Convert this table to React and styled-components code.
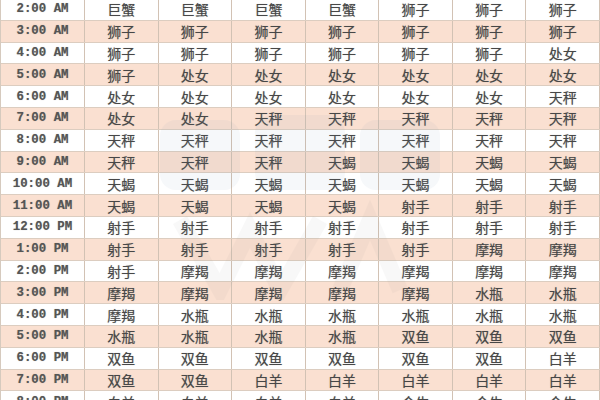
import React from "react";
import styled, { createGlobalStyle } from "styled-components";

const GlobalStyle = createGlobalStyle`
  html, body {
    margin: 0;
    padding: 0;
    background: #ffffff;
    overflow: hidden;
  }
`;

const rows = [
  ["2:00 AM", "巨蟹 巨蟹 巨蟹 巨蟹 狮子 狮子 狮子"],
  ["3:00 AM", "狮子 狮子 狮子 狮子 狮子 狮子 狮子"],
  ["4:00 AM", "狮子 狮子 狮子 狮子 狮子 狮子 处女"],
  ["5:00 AM", "狮子 处女 处女 处女 处女 处女 处女"],
  ["6:00 AM", "处女 处女 处女 处女 处女 处女 天秤"],
  ["7:00 AM", "处女 处女 天秤 天秤 天秤 天秤 天秤"],
  ["8:00 AM", "天秤 天秤 天秤 天秤 天秤 天秤 天秤"],
  ["9:00 AM", "天秤 天秤 天秤 天蝎 天蝎 天蝎 天蝎"],
  ["10:00 AM", "天蝎 天蝎 天蝎 天蝎 天蝎 天蝎 天蝎"],
  ["11:00 AM", "天蝎 天蝎 天蝎 天蝎 射手 射手 射手"],
  ["12:00 PM", "射手 射手 射手 射手 射手 射手 射手"],
  ["1:00 PM", "射手 射手 射手 射手 射手 摩羯 摩羯"],
  ["2:00 PM", "射手 摩羯 摩羯 摩羯 摩羯 摩羯 摩羯"],
  ["3:00 PM", "摩羯 摩羯 摩羯 摩羯 摩羯 水瓶 水瓶"],
  ["4:00 PM", "摩羯 水瓶 水瓶 水瓶 水瓶 水瓶 水瓶"],
  ["5:00 PM", "水瓶 水瓶 水瓶 水瓶 双鱼 双鱼 双鱼"],
  ["6:00 PM", "双鱼 双鱼 双鱼 双鱼 双鱼 双鱼 白羊"],
  ["7:00 PM", "双鱼 双鱼 白羊 白羊 白羊 白羊 白羊"],
  ["8:00 PM", "白羊 白羊 白羊 白羊 金牛 金牛 金牛"],
];

const Page = styled.div`
  position: relative;
  width: 600px;
  height: 400px;
  overflow: hidden;
  background: #ffffff;
`;

const Table = styled.div`
  margin-top: -1px;
  display: flex;
  flex-direction: column;
  border-left: 1px solid #d6cabe;
`;

const Row = styled.div`
  display: grid;
  grid-template-columns: 84px repeat(7, 1fr);
  height: 21.8px;
  box-sizing: border-box;
  border-bottom: 1px solid #dccdc0;
  background: ${(p) => (p.$alt ? "#fae0d1" : "#ffffff")};
`;

const Cell = styled.div`
  display: flex;
  align-items: center;
  justify-content: center;
  border-right: 1px solid #d2c2b4;
  color: ${(p) => (p.$time ? "#555555" : "#474747")};
  white-space: nowrap;
  font-family: ${(p) =>
    p.$time
      ? `"Liberation Mono", "DejaVu Sans Mono", monospace`
      : `"Noto Sans CJK SC", sans-serif`};
  font-size: ${(p) => (p.$time ? "12.4px" : "14px")};
  font-weight: ${(p) => (p.$time ? 600 : 400)};
  text-shadow: 0 0 0.8px rgba(80, 80, 80, 0.5);
`;

const Watermark = styled.svg`
  position: absolute;
  left: 150px;
  top: 110px;
  width: 300px;
  height: 190px;
  opacity: 0.06;
  pointer-events: none;
`;

export default function App() {
  return (
    <Page>
      <GlobalStyle />
      <Table>
        {rows.map(([time, signs], i) => (
          <Row key={time} $alt={i % 2 === 1}>
            <Cell $time>{time}</Cell>
            {signs.split(" ").map((s, j) => (
              <Cell key={j}>{s}</Cell>
            ))}
          </Row>
        ))}
      </Table>
      <Watermark viewBox="0 0 300 190">
        <rect x="10" y="10" width="80" height="70" rx="16" fill="#6f8fb0" />
        <rect x="105" y="5" width="90" height="75" rx="18" fill="#6f8fb0" />
        <rect x="210" y="10" width="80" height="70" rx="16" fill="#6f8fb0" />
        <path d="M30 110 L70 180 L100 120 L130 180 L170 110" stroke="#8f8f8f" strokeWidth="16" fill="none" />
        <path d="M190 180 L220 110 L250 180" stroke="#8f8f8f" strokeWidth="16" fill="none" />
      </Watermark>
    </Page>
  );
}
